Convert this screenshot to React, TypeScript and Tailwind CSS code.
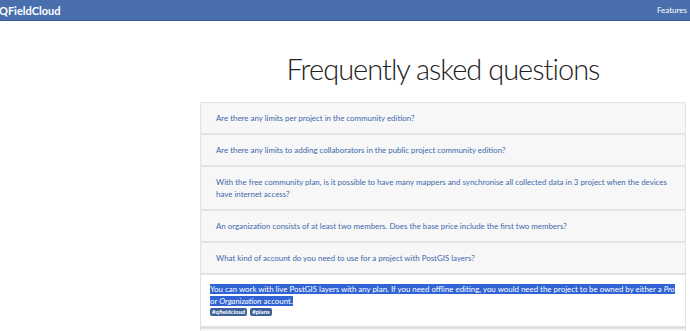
const questions = [
  "Are there any limits per project in the community edition?",
  "Are there any limits to adding collaborators in the public project community edition?",
  "With the free community plan, is it possible to have many mappers and synchronise all collected data in 3 project when the devices have internet access?",
  "An organization consists of at least two members. Does the base price include the first two members?",
  "What kind of account do you need to use for a project with PostGIS layers?",
];

const App = () => {
  return (
    <div className="w-[690px] h-[331px] overflow-hidden bg-white font-['Lato','Open_Sans',sans-serif]">
      <nav className="h-[21px] bg-[#4a6fae] border-b border-[#3b5c96] flex items-center justify-between pr-[3px]">
        <span className="text-white font-bold text-[11px] -ml-[1px] leading-none">QFieldCloud</span>
        <span className="text-white text-[8px] leading-none">Features</span>
      </nav>

      <div className="pl-[200px] pr-[4px]">
        <h1 className="text-center font-light text-[29px] tracking-[-1px] leading-none text-[#222] pt-[33px] pb-[19px]">
          Frequently asked questions
        </h1>

        <div className="flex flex-col">
          {questions.map((q) => (
            <div
              key={q}
              className="bg-[#f7f7f7] border border-[#e3e3e3] shadow-[0_1px_0_#dcdcdc] rounded-[2px] pl-[15px] pr-[10px] py-[9px] text-[7.9px] leading-[12px] text-[#3e68ad]"
            >
              {q}
            </div>
          ))}
          <div className="bg-white border border-[#e3e3e3] shadow-[0_1px_0_#dcdcdc] px-[9px] pt-[8px] pb-[10px] text-[7.9px] leading-[12px] text-[#222]">
            <p>
              <span className="bg-[#3063d3] text-white">
                You can work with live PostGIS layers with any plan. If you need offline editing, you would need the project to be owned by either a <em>Pro</em> or <em>Organization</em> account.
              </span>
            </p>
            <div className="flex gap-[3px] mt-[1px]">
              <span className="bg-[#3d5f9b] text-white font-bold text-[6px] leading-[8px] px-[2px] rounded-[2px]">#qfieldcloud</span>
              <span className="bg-[#3d5f9b] text-white font-bold text-[6px] leading-[8px] px-[2px] rounded-[2px]">#plans</span>
            </div>
          </div>
          <div className="bg-[#f7f7f7] border border-[#e3e3e3] h-[20px] mt-[1px]" />
        </div>
      </div>
    </div>
  );
};

export default App;
